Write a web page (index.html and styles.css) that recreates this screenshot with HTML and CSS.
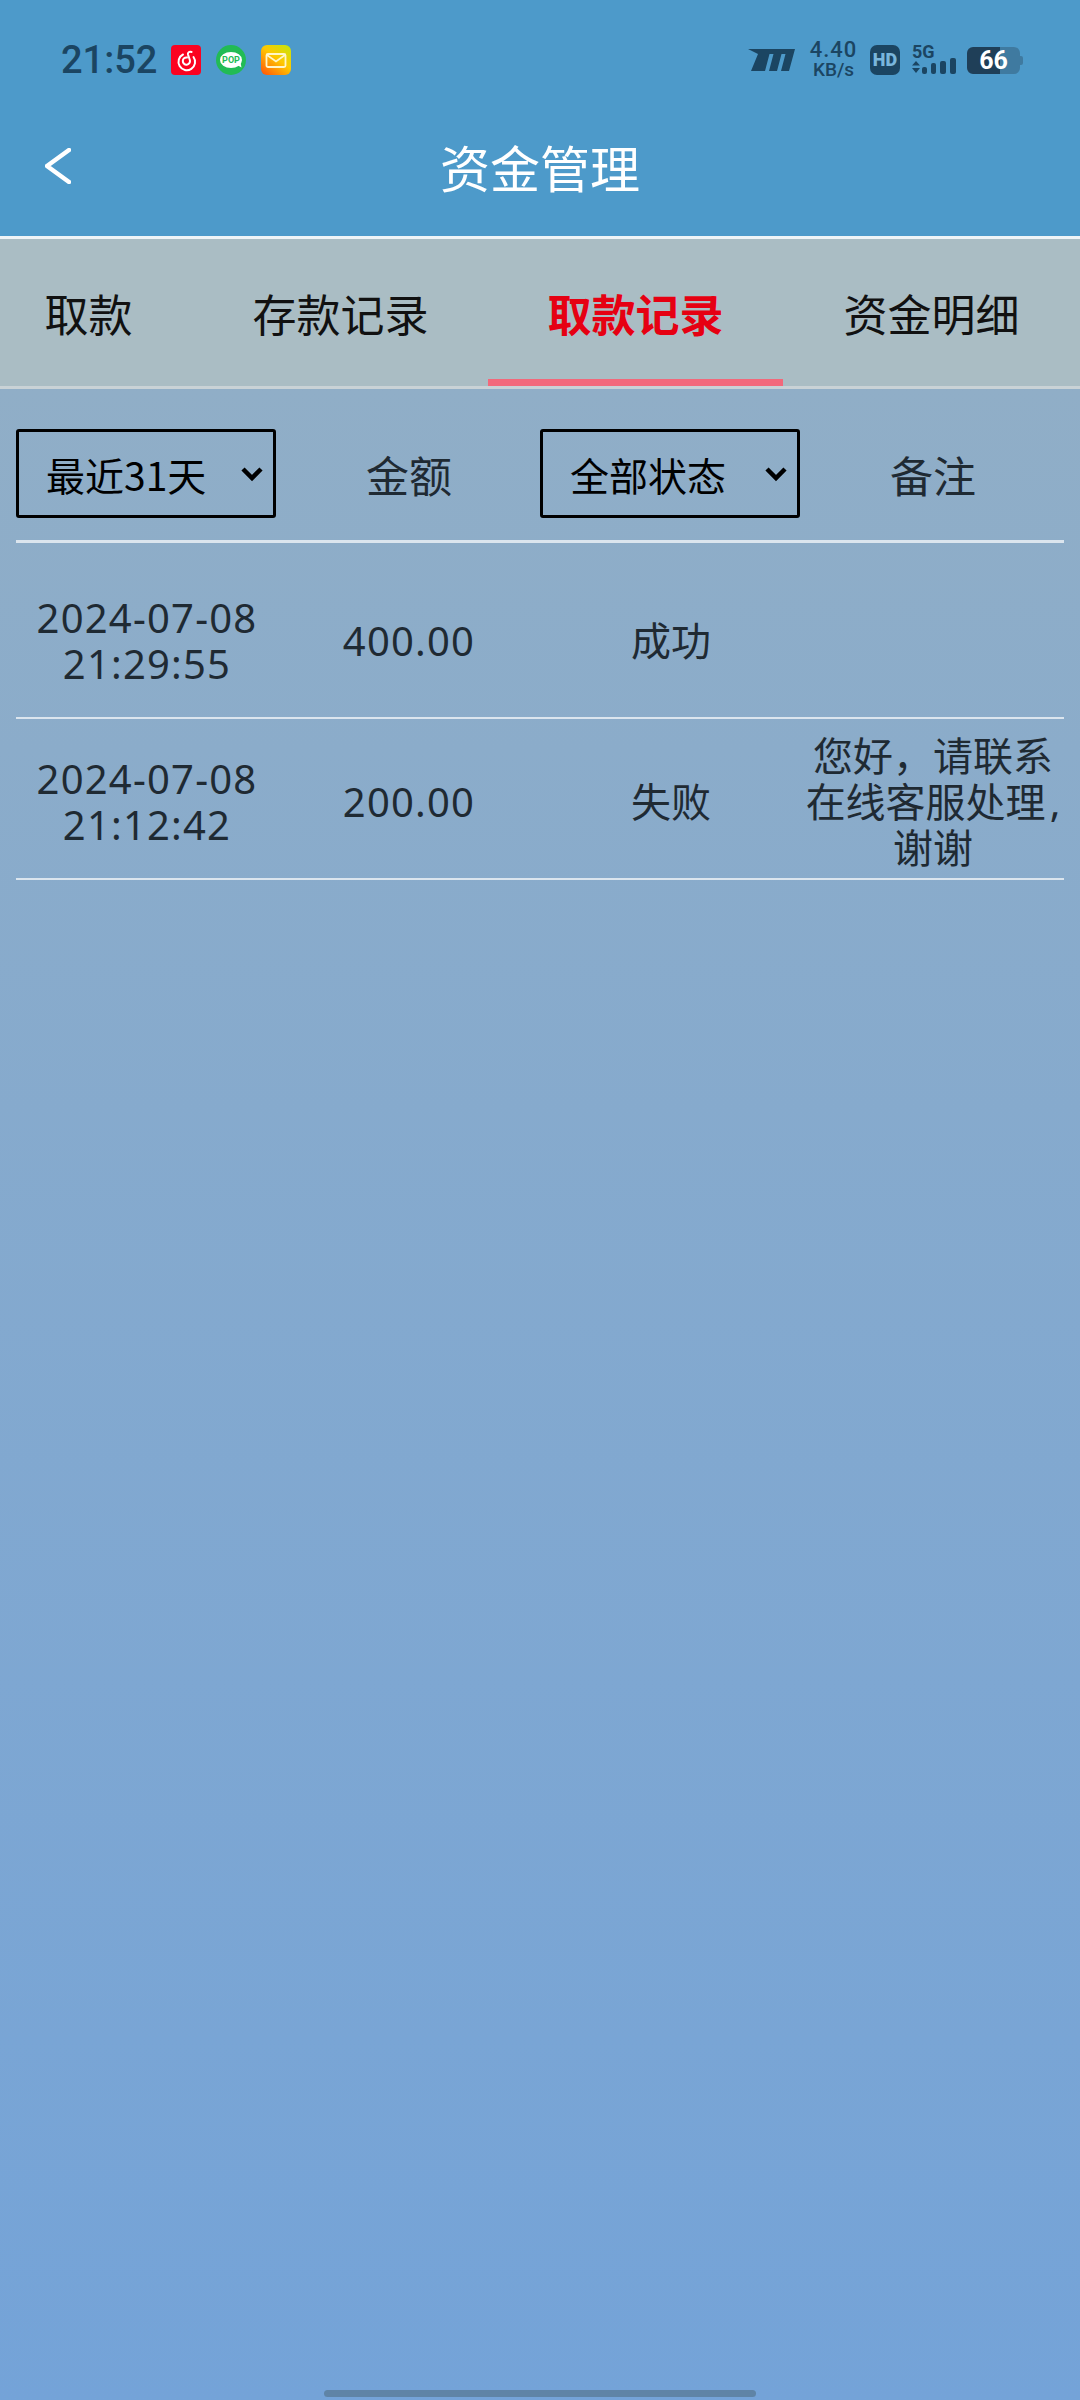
FILE: index.html
```html
<!DOCTYPE html>
<html lang="zh-CN">
<head>
    <meta charset="UTF-8" />
    <meta name="viewport" content="width=device-width, initial-scale=1.0"/>
    <title>资金管理</title>
    <link rel="stylesheet" href="styles.css">
</head>
<body>
    <header class="top">
        <div class="status">
            <div class="status-left">
                <span class="clock">21:52</span>
                <svg class="note-icon" viewBox="0 0 30 30">
                    <rect width="30" height="30" rx="4" fill="#fb0220"/>
                    <path d="M12 9.500A8.300 8.300 0 1 0 22.500 12M18.900 15.200a3.600 3.600 0 1 1-3-2.700M18.900 15.200L17 9.500c-.6-2 1.200-3.300 3.600-2.500" fill="none" stroke="#fff" stroke-width="2" stroke-linecap="round"/>
                </svg>
                <svg class="note-icon" viewBox="0 0 30 30">
                    <circle cx="15" cy="15" r="15" fill="#22bb55"/>
                    <ellipse cx="15" cy="15" rx="11" ry="8" fill="#fff"/>
                    <path d="M21 20l4.500 2.500-1-5z" fill="#fff"/>
                    <text class="pop" x="15" y="18">POP</text>
                </svg>
                <svg class="note-icon" viewBox="0 0 30 30">
                    <defs>
                        <linearGradient id="mailbg" x1="0.1" y1="1" x2="0.9" y2="0">
                            <stop offset="0" stop-color="#ff5a08"/>
                            <stop offset="0.55" stop-color="#ffc800"/>
                            <stop offset="1" stop-color="#c8e40c"/>
                        </linearGradient>
                    </defs>
                    <rect width="30" height="30" rx="6" fill="url(#mailbg)"/>
                    <rect x="5.500" y="9" width="19" height="13" rx="1.500" fill="none" stroke="#fff6c8" stroke-width="1.800"/>
                    <path d="M6 10l9 6.500 9-6.500" fill="none" stroke="#fff6c8" stroke-width="1.800"/>
                </svg>
            </div>
            <div class="status-right">
                <svg class="brand" viewBox="0 0 47 22">
                    <path d="M0 0H47L41 22H33L37.500 5H33.500L29 22H21L25.500 5H21.500L17 22H3L10 5Z" fill="#1b4562"/>
                </svg>
                <div class="speed"><span class="speed-num">4.40</span><span class="speed-unit">KB/s</span></div>
                <div class="hd">HD</div>
                <div class="signal">
                    <span class="fiveg">5G</span>
                    <svg class="bars" viewBox="0 0 46 17">
                        <path d="M0 7.500L4 3l4 4.500zM0 10l4 5 4-5z" fill="#1b4562"/>
                        <rect x="10" y="9" width="5" height="7" rx="2" fill="#1b4562"/>
                        <rect x="19" y="5" width="5" height="11" rx="2" fill="#1b4562"/>
                        <rect x="28" y="3" width="6" height="13" rx="2" fill="#1b4562"/>
                        <rect x="38" y="0" width="6" height="16" rx="2" fill="#1b4562"/>
                    </svg>
                </div>
                <div class="battery"><span class="battery-num">66</span></div>
            </div>
        </div>
        <nav class="title-bar">
            <svg class="back" viewBox="0 0 26 36">
                <polyline points="24,2 2,18 24,34" fill="none" stroke="#fff" stroke-width="4.500" stroke-linecap="round" stroke-linejoin="round"/>
            </svg>
            <h1 class="page-title">资金管理</h1>
        </nav>
    </header>

    <div class="tabs">
        <a class="tab tab-first">取款</a>
        <a class="tab">存款记录</a>
        <a class="tab tab-active">取款记录</a>
        <a class="tab">资金明细</a>
    </div>

    <main class="records">
        <div class="row row-head">
            <div class="cell">
                <select class="filter"><option>最近31天</option></select>
            </div>
            <div class="cell head-label">金额</div>
            <div class="cell">
                <select class="filter"><option>全部状态</option></select>
            </div>
            <div class="cell head-label">备注</div>
        </div>
        <div class="list">
            <div class="row">
                <div class="cell num">2024-07-08<br>21:29:55</div>
                <div class="cell num">400.00</div>
                <div class="cell">成功</div>
                <div class="cell"></div>
            </div>
            <div class="row">
                <div class="cell num">2024-07-08<br>21:12:42</div>
                <div class="cell num">200.00</div>
                <div class="cell">失败</div>
                <div class="cell">您好，请联系在线客服处理<span class="comma">,</span>谢谢</div>
            </div>
        </div>
    </main>

    <div class="home-bar"></div>
</body>
</html>
```

FILE: styles.css
```css
* { box-sizing: border-box; }
html, body { margin: 0; height: 100%; }
body { position: relative; display: flex; flex-direction: column; width: 1080px; height: 2400px; overflow: hidden; font-family: "Noto Sans", "Noto Sans CJK SC", sans-serif; color: #1f2a33; background: #7ba6d3; }

.top { background-color: #4d9aca; border-bottom: 3px solid #eef4f7; }
.status { display: flex; justify-content: space-between; align-items: center; height: 96px; padding: 24px 60px 0 61px; color: #1b4562; }
.status-left { display: flex; align-items: center; }
.clock { font-family: Roboto, sans-serif; font-size: 38px; font-weight: 500; margin-right: 14px; }
.note-icon { width: 30px; height: 30px; margin-right: 15px; }
.pop { font-family: Roboto, sans-serif; font-size: 9px; font-weight: 700; fill: #22bb55; text-anchor: middle; }
.status-right { display: flex; align-items: center; }
.brand { width: 47px; height: 22px; margin-right: 15px; }
.speed { display: flex; flex-direction: column; align-items: center; width: 47px; margin-right: 13px; font-family: Roboto, sans-serif; line-height: 20px; }
.speed-num { font-size: 22px; font-weight: 500; letter-spacing: 1px; }
.speed-unit { font-size: 19px; font-weight: 500; }
.hd { width: 30px; height: 30px; border-radius: 7px; background: #1b4562; color: #79b6dc; font-family: Roboto, sans-serif; font-size: 18px; font-weight: 900; line-height: 30px; text-align: center; margin-right: 12px; }
.signal { display: flex; flex-direction: column; width: 46px; height: 30px; margin-right: 9px; }
.fiveg { height: 13px; font-family: Roboto, sans-serif; font-size: 18px; font-weight: 700; line-height: 13px; }
.bars { display: block; width: 46px; height: 17px; }
.battery { position: relative; width: 53px; height: 27px; border-radius: 6px; background: linear-gradient(to right, #1f3f58 62%, #3f7aa0 62%); color: #fff; font-family: Roboto, sans-serif; font-size: 25px; font-weight: 700; line-height: 27px; text-align: center; }
.battery::after { content: ""; position: absolute; right: -3px; top: 9px; width: 3px; height: 9px; border-radius: 0 2px 2px 0; background: #3f7aa0; }

.title-bar { position: relative; display: flex; justify-content: center; align-items: center; height: 140px; }
.back { position: absolute; left: 45px; top: 52px; width: 26px; height: 36px; }
.page-title { margin: 0; color: #fff; font-size: 50px; font-weight: 400; line-height: 1.4; font-family: "Noto Sans CJK SC", sans-serif; }

.tabs { display: grid; grid-template-columns: 193px 295px 295px 297px; height: 150px; background-color: #aabdc4; border-bottom: 3px solid #c9d2d6; }
.tab { display: flex; justify-content: center; align-items: center; padding-top: 7px; border-bottom: 7px solid transparent; color: #111; font-size: 44px; font-family: "Noto Sans CJK SC", sans-serif; }
.tab-first { padding-right: 16px; }
.tab-active { color: #e60012; font-weight: 700; border-bottom-color: #f2697b; }

.records { flex: 1; padding: 0 16px; background: linear-gradient(to bottom, #90aec7, #74a3d8); }
.row { display: grid; grid-template-columns: repeat(4, 1fr); align-items: center; min-height: 158px; padding-top: 4px; border-bottom: 2px solid #dbe5ee; font-size: 40px; line-height: 46px; text-align: center; }
.row + .row { min-height: 161px; padding-top: 7px; }
.row-head { min-height: 0; padding: 40px 0 22px; border-bottom-width: 3px; }
.list { margin-top: 18px; }
.cell { min-width: 0; }
.num { letter-spacing: 1.2px; }
.comma { margin-left: 4px; }
.head-label { font-size: 43px; font-family: "Noto Sans CJK SC", sans-serif; }
.filter { display: block; width: 260px; height: 89px; padding: 0 40px 0 27px; appearance: none; background: transparent url("data:image/svg+xml,%3Csvg xmlns='http://www.w3.org/2000/svg' width='24' height='16'%3E%3Cpolyline points='3,3 12,12 21,3' fill='none' stroke='black' stroke-width='4.500'/%3E%3C/svg%3E") no-repeat right 9px center; border: 3px solid #000; border-radius: 3px; color: #000; font-size: 39px; font-family: "Noto Sans CJK SC", sans-serif; }

.home-bar { position: absolute; left: 324px; bottom: 3px; width: 432px; height: 7px; border-radius: 4px; background: #5f84a6; }
```
